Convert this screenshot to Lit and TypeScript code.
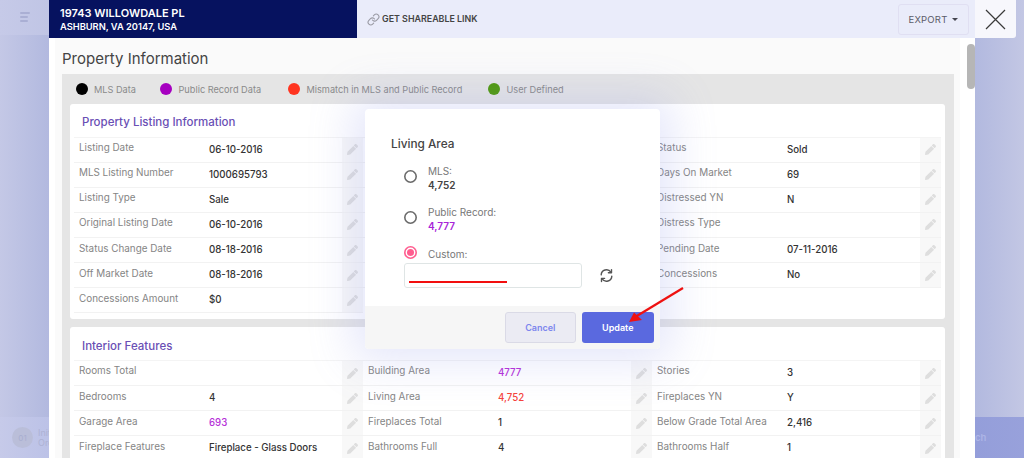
import { LitElement, html, css, svg } from "lit";
import { customElement } from "lit/decorators.js";

type Cell = [string, string, string?] | null;

const listing: Cell[][] = [
  [["Listing Date", "06-10-2016"], ["", ""], ["Status", "Sold"]],
  [["MLS Listing Number", "1000695793"], ["", ""], ["Days On Market", "69"]],
  [["Listing Type", "Sale"], ["", ""], ["Distressed YN", "N"]],
  [["Original Listing Date", "06-10-2016"], ["", ""], ["Distress Type", ""]],
  [["Status Change Date", "08-18-2016"], ["", ""], ["Pending Date", "07-11-2016"]],
  [["Off Market Date", "08-18-2016"], ["", ""], ["Concessions", "No"]],
  [["Concessions Amount", "$0"], null, null],
];

const interior: Cell[][] = [
  [["Rooms Total", ""], ["Building Area", "4777", "pub"], ["Stories", "3"]],
  [["Bedrooms", "4"], ["Living Area", "4,752", "mis"], ["Fireplaces YN", "Y"]],
  [["Garage Area", "693", "pub"], ["Fireplaces Total", "1"], ["Below Grade Total Area", "2,416"]],
  [["Fireplace Features", "Fireplace - Glass Doors"], ["Bathrooms Full", "4"], ["Bathrooms Half", "1"]],
];

const pencil = svg`<path d="M497.9 142.1l-46.1 46.1c-4.7 4.7-12.3 4.7-17 0l-111-111c-4.7-4.7-4.7-12.3 0-17l46.1-46.1c18.7-18.7 49.1-18.7 67.9 0l60.1 60.1c18.8 18.7 18.8 49.1 0 67.9zM284.2 99.8L21.6 362.4.4 483.9c-2.9 16.4 11.4 30.6 27.8 27.8l121.5-21.3 262.6-262.6c4.7-4.7 4.7-12.3 0-17l-111-111c-4.8-4.7-12.4-4.7-17.1 0z"/>`;

@customElement("app-root")
export class AppRoot extends LitElement {
  static styles = css`
    :host {
      display: grid;
      grid-template-columns: 49px 926px 49px;
      grid-template-rows: 458px;
      height: 458px;
      overflow: hidden;
      position: relative;
      font-family: Inter, "Liberation Sans", sans-serif;
      color: #333;
    }
    .side { display: flex; flex-direction: column; overflow: hidden; }
    .left { background: linear-gradient(90deg, #c4c8e6, #b2b9df); }
    .right { background: linear-gradient(90deg, #b2b9df, #c3c7e4); }
    .left-top { height: 35px; background: linear-gradient(90deg, #c6cae8, #c0c5e5); display: flex; flex-direction: column; gap: 2px; padding: 12px 0 0 20px; box-sizing: border-box; }
    .left-top i { display: block; height: 2px; background: #aaafd4; border-radius: 1px; }
    .left-top i:nth-child(1) { width: 10px; }
    .left-top i:nth-child(2) { width: 8px; }
    .left-top i:nth-child(3) { width: 8px; }
    .spacer { flex: 1; }
    .left-bottom { height: 41px; flex: none; background: linear-gradient(90deg, #c6cae9, #bcc2e7); display: flex; align-items: center; padding-left: 12px; gap: 5px; white-space: nowrap; }
    .step { flex: none; width: 21px; height: 21px; border-radius: 50%; background: #babed9; color: #a9aed0; font-size: 8px; display: flex; align-items: center; justify-content: center; }
    .step-text { font-size: 9px; line-height: 10px; color: #adb2d4; }
    .right-bottom { height: 41px; flex: none; background: linear-gradient(90deg, #949eda, #98a1db); display: flex; align-items: center; font-size: 9.5px; font-weight: 600; color: #adb5e6; }
    .close { display: flex; width: 41px; height: 38px; flex: none; background: #f7f7fc; border-bottom-right-radius: 3px; align-items: center; justify-content: center; }
    .close svg { width: 21px; height: 21px; stroke: #3a3a3a; stroke-width: 1.2; fill: none; }

    .main { display: flex; flex-direction: column; background: #fff; min-width: 0; min-height: 0; position: relative; }
    .topbar { height: 38px; flex: none; display: flex; background: #eaecfa; }
    .addr { width: 308px; background: #06125f; color: #fff; box-sizing: border-box; padding: 6px 0 0 11px; }
    .addr b { display: block; font-weight: 600; font-size: 11px; line-height: 14px; }
    .addr span { display: block; font-weight: 600; font-size: 9.3px; line-height: 14px; }
    .share { display: flex; align-items: center; gap: 2px; padding: 0 0 2px 10px; font-size: 8.9px; font-weight: 600; color: #444; flex: 1; }
    .share svg { width: 13px; height: 13px; fill: none; stroke: #9a9aa4; stroke-width: 2; margin-top: 2px; }
    .export { align-self: flex-start; margin: 4px 6px 0 0; width: 71px; height: 31px; box-sizing: border-box; border: 1px solid #e0dff2; border-radius: 3px; display: flex; align-items: center; justify-content: center; gap: 5px; font-size: 9.5px; color: #5b5b68; letter-spacing: .2px; }
    .caret { width: 0; height: 0; border-left: 3.5px solid transparent; border-right: 3.5px solid transparent; border-top: 3.5px solid #44444f; }

    .page { flex: 1; margin: 0 15px 0 6px; background: #fafafa; padding: 0 6px 0 7px; min-height: 0; overflow: hidden; }
    h1 { margin: 0; height: 36px; box-sizing: border-box; padding-top: 4px; display: flex; align-items: center; font-size: 15px; font-weight: 400; color: #444; }
    .zone { background: #e5e5e5; padding: 0 9px 0 8px; }
    .legend { height: 30px; display: grid; grid-template-columns: 84.5px 128px 200px auto; align-items: center; padding-left: 5.5px; font-size: 9.2px; color: #8a8a8a; }
    .legend div { display: flex; align-items: center; gap: 6.5px; white-space: nowrap; }
    .dot { width: 12px; height: 12px; border-radius: 50%; flex: none; }
    .card { background: #fff; border-radius: 3px; padding: 0 4px 6px; margin-bottom: 8px; }
    h2 { margin: 0; height: 32.5px; box-sizing: border-box; padding: 4px 0 0 8px; display: flex; align-items: center; font-size: 11.5px; font-weight: 500; color: #6a4fb5; }
    .rows { display: grid; grid-template-columns: repeat(3, 289px); grid-auto-rows: 25.15px; border-top: 1px solid #f4f4f4; }
    .cell { display: grid; grid-template-columns: 135px 133px 21px; border-bottom: 1.5px solid #f2f2f2; box-sizing: border-box; min-width: 0; }
    .label { padding: 3.5px 0 0 5px; font-size: 9.9px; line-height: 13px; color: #858585; white-space: nowrap; overflow: hidden; }
    .value { padding-top: 5px; font-size: 9.7px; line-height: 13px; color: #333; font-weight: 500; white-space: nowrap; }
    .value.pub { color: #b62fd8; }
    .value.mis { color: #f5423c; }
    .edit { background: #f8f8f8; display: flex; align-items: center; justify-content: center; }
    .edit svg { width: 11px; height: 11px; fill: #dedede; }

    .scroll { position: absolute; right: 0; top: 44px; width: 8px; height: 45px; background: #b6b6b6; border-radius: 4px; }

    .modal { position: absolute; left: 365px; top: 109px; width: 295px; height: 240px; background: #fff; border-radius: 4px; box-shadow: 0 0 45px 12px rgba(130, 140, 230, .22); display: flex; flex-direction: column; overflow: hidden; }
    .modal-body { flex: 1; padding: 26px 0 0 26px; }
    .modal-title { font-size: 11.8px; font-weight: 500; line-height: 18px; color: #444; margin-bottom: 11px; }
    .opt { display: flex; gap: 11px; align-items: flex-start; margin: 0 0 13px 13px; height: 28px; }
    .opt .radio { margin-top: 6px; }
    .radio { width: 13px; height: 13px; border-radius: 50%; box-shadow: inset 0 0 0 1.6px #6a6a6a; flex: none; }
    .opt-label { font-size: 10px; line-height: 14px; color: #777; }
    .opt-value { font-size: 10px; line-height: 14px; font-weight: 600; color: #444; }
    .opt-value.pub { color: #a725d8; }
    .custom { display: flex; gap: 11px; margin: -2px 0 2.5px 13px; height: 16px; font-size: 10px; color: #777; align-items: center; }
    .custom .label2 { padding-top: 4px; }
    .radio.on { box-shadow: inset 0 0 0 1.6px #ff5d8f; display: flex; align-items: center; justify-content: center; }
    .radio.on::after { content: ""; width: 7px; height: 7px; border-radius: 50%; background: #ff5d8f; }
    .field-row { display: flex; align-items: center; gap: 17px; margin-left: 13px; }
    .field { width: 178px; height: 25px; box-sizing: border-box; border: 1px solid #dfe5e5; border-radius: 3px; position: relative; }
    .underline { position: absolute; left: 4px; top: 17px; width: 98px; height: 2.5px; background: #f20f0f; }
    .sync { width: 15px; height: 15px; fill: none; stroke: #555; stroke-width: 2.2; }
    .modal-foot { height: 43px; flex: none; background: #f6f6f6; display: flex; justify-content: flex-end; align-items: flex-start; gap: 6px; padding: 6px 6.5px 0 0; box-sizing: border-box; }
    .btn { width: 71.5px; height: 31px; box-sizing: border-box; border-radius: 3px; display: flex; align-items: center; justify-content: center; font-size: 9px; font-weight: 600; }
    .cancel { background: #ebebf3; border: 1px solid #dadae6; color: #7d86ee; }
    .update { background: #5a69df; color: #fff; }
    .arrow { position: absolute; left: 0; top: 0; width: 1024px; height: 458px; pointer-events: none; }
  `;

  private renderCell(c: Cell) {
    if (!c) return html`<div></div>`;
    return html`<div class="cell">
      <div class="label">${c[0]}</div>
      <div class="value ${c[2] ?? ""}">${c[1]}</div>
      <div class="edit"><svg viewBox="0 0 512 512">${pencil}</svg></div>
    </div>`;
  }

  private renderCard(title: string, rows: Cell[][]) {
    return html`<section class="card">
      <h2>${title}</h2>
      <div class="rows">${rows.flat().map((c) => this.renderCell(c))}</div>
    </section>`;
  }

  render() {
    return html`
      <aside class="side left">
        <div class="left-top"><i></i><i></i><i></i></div>
        <div class="spacer"></div>
        <div class="left-bottom">
          <div class="step">01</div>
          <div class="step-text">Initial<br />Order</div>
        </div>
      </aside>
      <main class="main">
        <header class="topbar">
          <div class="addr"><b>19743 WILLOWDALE PL</b><span>ASHBURN, VA 20147, USA</span></div>
          <div class="share">
            <svg viewBox="0 0 24 24" stroke-linecap="round"><path d="M10 13a5 5 0 0 0 7.54.54l3-3a5 5 0 0 0-7.07-7.07l-1.72 1.71" /><path d="M14 11a5 5 0 0 0-7.54-.54l-3 3a5 5 0 0 0 7.07 7.07l1.71-1.71" /></svg>
            GET SHAREABLE LINK
          </div>
          <div class="export">EXPORT <span class="caret"></span></div>
        </header>
        <div class="page">
          <h1>Property Information</h1>
          <div class="zone">
            <div class="legend">
              <div><span class="dot" style="background:#000"></span>MLS Data</div>
              <div><span class="dot" style="background:#a600c0"></span>Public Record Data</div>
              <div><span class="dot" style="background:#ff3520"></span>Mismatch in MLS and Public Record</div>
              <div><span class="dot" style="background:#4f9a0a"></span>User Defined</div>
            </div>
            ${this.renderCard("Property Listing Information", listing)}
            ${this.renderCard("Interior Features", interior)}
          </div>
        </div>
        <div class="scroll"></div>
      </main>
      <aside class="side right">
        <div class="close">
          <svg viewBox="0 0 21 21"><path d="M1 1 L20 20 M20 1 L1 20" /></svg>
        </div>
        <div class="spacer"></div>
        <div class="right-bottom">ch</div>
      </aside>

      <div class="modal">
        <div class="modal-body">
          <div class="modal-title">Living Area</div>
          <div class="opt">
            <span class="radio"></span>
            <div><div class="opt-label">MLS:</div><div class="opt-value">4,752</div></div>
          </div>
          <div class="opt">
            <span class="radio"></span>
            <div><div class="opt-label">Public Record:</div><div class="opt-value pub">4,777</div></div>
          </div>
          <div class="custom"><span class="radio on"></span><span class="label2">Custom:</span></div>
          <div class="field-row">
            <div class="field"><div class="underline"></div></div>
            <svg class="sync" viewBox="0 0 24 24" stroke-linecap="round" stroke-linejoin="round">
              <path d="M3.5 11A8.5 8.5 0 0 1 19 6.5" /><path d="M20 2.5V7.5h-5" />
              <path d="M20.5 13A8.5 8.5 0 0 1 5 17.5" /><path d="M4 21.5V16.5h5" />
            </svg>
          </div>
        </div>
        <div class="modal-foot">
          <div class="btn cancel">Cancel</div>
          <div class="btn update">Update</div>
        </div>
      </div>

      <svg class="arrow" viewBox="0 0 1024 458">
        <path d="M683 288 L636 316.5" stroke="#ee1111" stroke-width="2.2" fill="none" />
        <polygon points="629,322 634,312.5 642,320" fill="#ee1111" />
      </svg>
    `;
  }
}
